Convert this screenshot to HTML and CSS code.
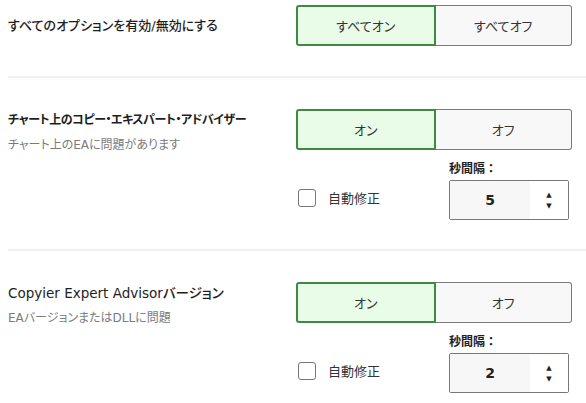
FILE: index.html
```html
<!DOCTYPE html>
<html lang="ja">
<head>
<meta charset="utf-8">
<link rel="stylesheet" href="styles.css">
</head>
<body>
<div class="page">
  <section class="row row-first">
    <div class="info">
      <div class="title">すべてのオプションを有効/無効にする</div>
    </div>
    <div class="controls">
      <div class="toggle">
        <button class="seg seg-on">すべてオン</button>
        <button class="seg seg-off">すべてオフ</button>
      </div>
    </div>
  </section>

  <section class="row">
    <div class="info">
      <div class="title title-bold">チャート上のコピー・エキスパート・アドバイザー</div>
      <div class="sub">チャート上のEAに問題があります</div>
    </div>
    <div class="controls">
      <div class="toggle">
        <button class="seg seg-on">オン</button>
        <button class="seg seg-off">オフ</button>
      </div>
      <div class="extra">
        <label class="check"><span class="box"></span><span class="check-label">自動修正</span></label>
        <div class="interval">
          <div class="interval-label">秒間隔：</div>
          <div class="num">
            <span class="num-value">5</span>
            <span class="spin"><span class="arr">&#9650;</span><span class="arr">&#9660;</span></span>
          </div>
        </div>
      </div>
    </div>
  </section>

  <section class="row row-last">
    <div class="info">
      <div class="title title-latin">Copyier Expert Advisorバージョン</div>
      <div class="sub">EAバージョンまたはDLLに問題</div>
    </div>
    <div class="controls">
      <div class="toggle">
        <button class="seg seg-on">オン</button>
        <button class="seg seg-off">オフ</button>
      </div>
      <div class="extra">
        <label class="check"><span class="box"></span><span class="check-label">自動修正</span></label>
        <div class="interval">
          <div class="interval-label">秒間隔：</div>
          <div class="num">
            <span class="num-value">2</span>
            <span class="spin"><span class="arr">&#9650;</span><span class="arr">&#9660;</span></span>
          </div>
        </div>
      </div>
    </div>
  </section>
</div>
</body>
</html>
```
FILE: styles.css
```css
* { box-sizing: border-box; }
html, body { margin: 0; padding: 0; background: #fff; }
body {
  font-family: "DejaVu Sans", "Noto Sans CJK JP", sans-serif;
  font-feature-settings: "palt";
  color: #222;
  width: 586px;
  height: 403px;
  overflow: hidden;
}
.page { padding-left: 8px; }
.row {
  display: flex;
  justify-content: space-between;
  padding: 31px 14px 29px 0;
  border-bottom: 2px solid #f1f1f1;
}
.row-first { padding-top: 5px; padding-bottom: 30px; align-items: center; }
.row-last { border-bottom: none; }
.row:not(.row-first) .info { padding-top: 2px; }
.title {
  font-size: 13px;
  line-height: 18px;
  font-weight: 500;
  color: #1e1e1e;
}
.title-bold {
  font-weight: 700;
  font-size: 12px;
  letter-spacing: -0.45px;
}
.title-latin { font-size: 13.5px; }
.sub {
  margin-top: 7px;
  font-size: 12px;
  line-height: 18px;
  color: #7b7b7b;
}
.controls { width: 276px; }
.toggle { display: flex; height: 41px; }
.seg {
  flex: 1;
  font-family: inherit;
  font-feature-settings: "palt";
  font-size: 13px;
  color: #333;
  padding: 0;
  margin: 0;
  cursor: pointer;
}
.seg-on {
  background: #e8fce8;
  border: 2px solid #3e8a42;
  border-radius: 3px 0 0 3px;
}
.seg-off {
  background: #f8f8f8;
  border: 1px solid #7a7a7a;
  border-left: none;
  border-radius: 0 3px 3px 0;
}
.extra {
  display: flex;
  justify-content: space-between;
  align-items: flex-end;
  padding: 10px 3px 0 2px;
}
.check {
  display: flex;
  align-items: center;
  height: 40px;
  padding-bottom: 5px;
}
.box {
  width: 18px;
  height: 18px;
  border: 1px solid #777;
  border-radius: 3px;
  background: #fff;
}
.check-label {
  margin-left: 12px;
  font-size: 13px;
  color: #333;
}
.interval { width: 120px; }
.interval-label {
  font-size: 12px;
  font-weight: 700;
  line-height: 16px;
  margin-bottom: 4px;
  color: #1e1e1e;
  font-feature-settings: normal;
  font-family: "Noto Sans CJK JP", sans-serif;
}
.num {
  display: flex;
  height: 40px;
  border: 1px solid #777;
  border-radius: 2px;
  overflow: hidden;
}
.num-value {
  width: 80px;
  background: #f7f7f7;
  display: flex;
  align-items: center;
  justify-content: center;
  font-size: 14px;
  font-weight: 700;
  color: #222;
}
.spin {
  flex: 1;
  display: flex;
  flex-direction: column;
  align-items: center;
  justify-content: center;
  gap: 1px;
  background: #fff;
}
.arr {
  font-size: 7px;
  line-height: 10px;
  color: #222;
}
```
